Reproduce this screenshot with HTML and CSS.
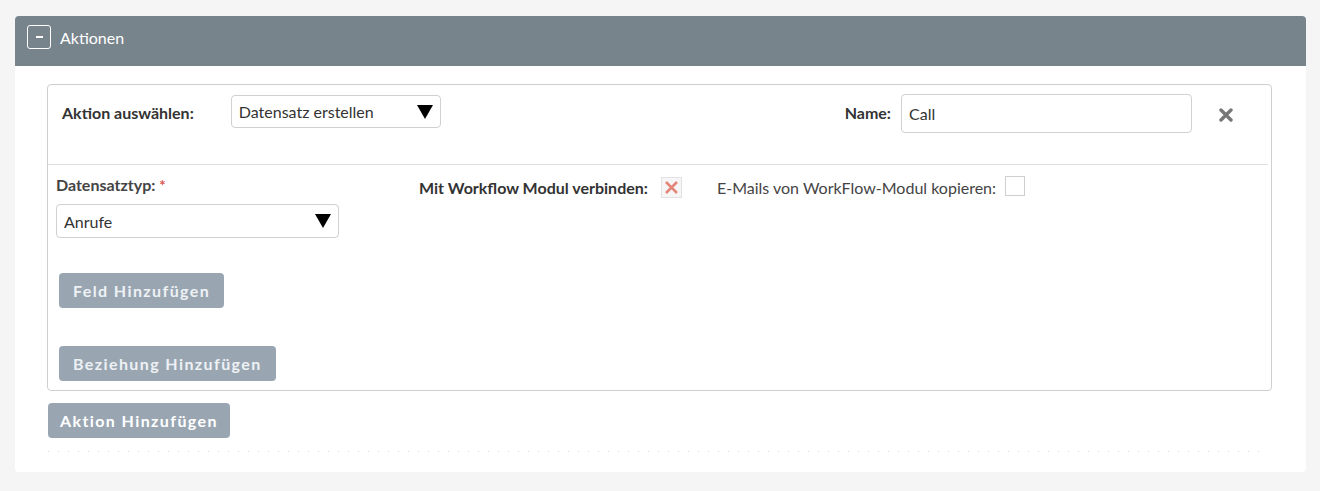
FILE: index.html
```html
<!DOCTYPE html>
<html lang="de">
<head>
    <meta charset="UTF-8">
    <meta name="viewport" content="width=device-width, initial-scale=1.0">
    <title>Aktionen</title>
    <link rel="stylesheet" href="styles.css">
</head>
<body>
    <div class="panel">
        <div class="panel-heading">
            <span class="toggle"><span class="minus"></span></span>
            <span class="panel-title">Aktionen</span>
        </div>
        <div class="panel-body">
            <div class="action-box">
                <div class="action-head">
                    <label class="label">Aktion auswählen:</label>
                    <div class="select select-action">
                        <span>Datensatz erstellen</span>
                        <svg class="arrow" width="16" height="14" viewBox="0 0 16 14"><polygon points="0,0 16,0 8,14" fill="#000"/></svg>
                    </div>
                    <div class="spacer"></div>
                    <label class="label">Name:</label>
                    <input type="text" class="input-name" value="Call">
                    <span class="remove">
                        <svg width="14" height="14" viewBox="0 0 14 14"><path d="M2 2 L12 12 M12 2 L2 12" stroke="#777" stroke-width="3.4" stroke-linecap="round"/></svg>
                    </span>
                </div>
                <div class="action-body">
                    <div class="fields-row">
                        <div class="col col-type">
                            <label class="label">Datensatztyp: <span class="required">*</span></label>
                            <div class="select select-type">
                                <span>Anrufe</span>
                                <svg class="arrow" width="16" height="14" viewBox="0 0 16 14"><polygon points="0,0 16,0 8,14" fill="#000"/></svg>
                            </div>
                        </div>
                        <div class="col col-rel">
                            <label class="label">Mit Workflow Modul verbinden:</label>
                            <span class="checkbox checked">
                                <svg width="15" height="15" viewBox="0 0 15 15"><path d="M2 2 L13 13 M13 2 L2 13" stroke="#e4857a" stroke-width="2.5"/></svg>
                            </span>
                        </div>
                        <div class="col col-copy">
                            <span class="plain-label">E-Mails von WorkFlow-Modul kopieren:</span>
                            <span class="checkbox empty"></span>
                        </div>
                    </div>
                    <button class="btn btn-light btn-field">Feld Hinzufügen</button>
                    <button class="btn btn-light btn-rel">Beziehung Hinzufügen</button>
                </div>
            </div>
            <button class="btn btn-add">Aktion Hinzufügen</button>
            <div class="dots"></div>
        </div>
    </div>
</body>
</html>
```

FILE: styles.css
```css
body {
    margin: 0;
    padding: 16px 14px 0 15px;
    background-color: #f5f5f5;
    font-family: Lato, "Open Sans", sans-serif;
    color: #333;
}

.panel {
    width: 1291px;
    height: 456px;
    background-color: #fff;
    border-radius: 4px;
}

.panel-heading {
    height: 50px;
    box-sizing: border-box;
    background-color: #78848c;
    border-radius: 4px 4px 0 0;
    display: flex;
    align-items: flex-start;
    padding: 9px 0 0 12px;
}

.toggle {
    width: 22px;
    height: 22px;
    border: 1px solid #fff;
    border-radius: 3px;
    display: flex;
    align-items: center;
    justify-content: center;
}

.minus {
    width: 7px;
    height: 2px;
    background-color: #fff;
}

.panel-title {
    margin-left: 9px;
    color: #fff;
    font-size: 16px;
    line-height: 26px;
}

.panel-body {
    padding: 18px 34px 0 32px;
}

.action-box {
    height: 305px;
    border: 1px solid #cfcfcf;
    border-radius: 4px;
}

.action-head {
    height: 80px;
    margin-right: 3px;
    border-bottom: 1px solid #dedede;
    display: flex;
    align-items: flex-start;
    padding-left: 14px;
    padding-right: 35px;
    padding-top: 9px;
    box-sizing: border-box;
}

.label {
    font-weight: bold;
    font-size: 16px;
    color: #333;
}

.action-head .label {
    line-height: 38px;
}

.select {
    border: 1px solid #d0d0d0;
    border-radius: 4px;
    box-sizing: border-box;
    display: flex;
    align-items: center;
    justify-content: space-between;
    padding: 0 7px 0 7px;
    font-size: 16px;
    color: #333;
    background-color: #fff;
}

.select-action {
    width: 210px;
    height: 33px;
    margin-left: 37px;
    margin-top: 1px;
}

.spacer {
    flex: 1;
}

.input-name {
    width: 291px;
    height: 39px;
    margin: 0 0 0 10px;
    box-sizing: border-box;
    border: 1px solid #d0d0d0;
    border-radius: 4px;
    padding: 0 7px;
    font-family: Lato, "Open Sans", sans-serif;
    font-size: 16px;
    color: #333;
}

.remove {
    margin-left: 27px;
    height: 42px;
    display: flex;
    align-items: center;
}

.action-body {
    padding: 10px 0 0 8px;
}

.fields-row {
    display: flex;
    align-items: flex-start;
}

.col-type {
    width: 363px;
}

.col-type .label {
    color: #444;
    display: block;
    line-height: 20px;
}

.required {
    color: #d9534f;
    font-size: 15px;
    vertical-align: top;
}

.select-type {
    width: 283px;
    height: 34px;
    margin-top: 9px;
}

.col {
    display: flex;
    flex-direction: column;
}

.col-rel,
.col-copy {
    flex-direction: row;
    align-items: center;
    height: 22px;
    margin-top: 1px;
}

.col-rel {
    width: 298px;
}

.checkbox {
    box-sizing: border-box;
    display: inline-flex;
    align-items: center;
    justify-content: center;
}

.checkbox.checked {
    width: 21px;
    height: 21px;
    border: 1px solid #e2e2e2;
    background-color: #f6f6f6;
    margin-left: 13px;
}

.checkbox.empty {
    width: 20px;
    height: 20px;
    border: 1px solid #cfcfcf;
    margin-left: 9px;
    margin-top: -2px;
}

.plain-label {
    font-size: 16px;
    color: #444;
}

.btn {
    display: block;
    border: none;
    border-radius: 4px;
    background-color: #99a6b2;
    font-family: Lato, "Open Sans", sans-serif;
    font-weight: bold;
    font-size: 16px;
    letter-spacing: 1.4px;
    cursor: pointer;
}

.btn-light {
    color: #eef1f4;
    height: 35px;
    padding: 0 14px;
    margin-left: 3px;
}

.btn-field {
    margin-top: 35px;
}

.btn-rel {
    margin-top: 38px;
}

.btn-add {
    color: #fff;
    height: 35px;
    padding: 0 12px;
    margin-top: 12px;
    margin-left: 1px;
}

.dots {
    width: 1214px;
    height: 1px;
    margin: 13px 0 0 1px;
    background-image: repeating-linear-gradient(to right, #d8d8d8 0, #d8d8d8 1px, transparent 1px, transparent 10px);
}
```
